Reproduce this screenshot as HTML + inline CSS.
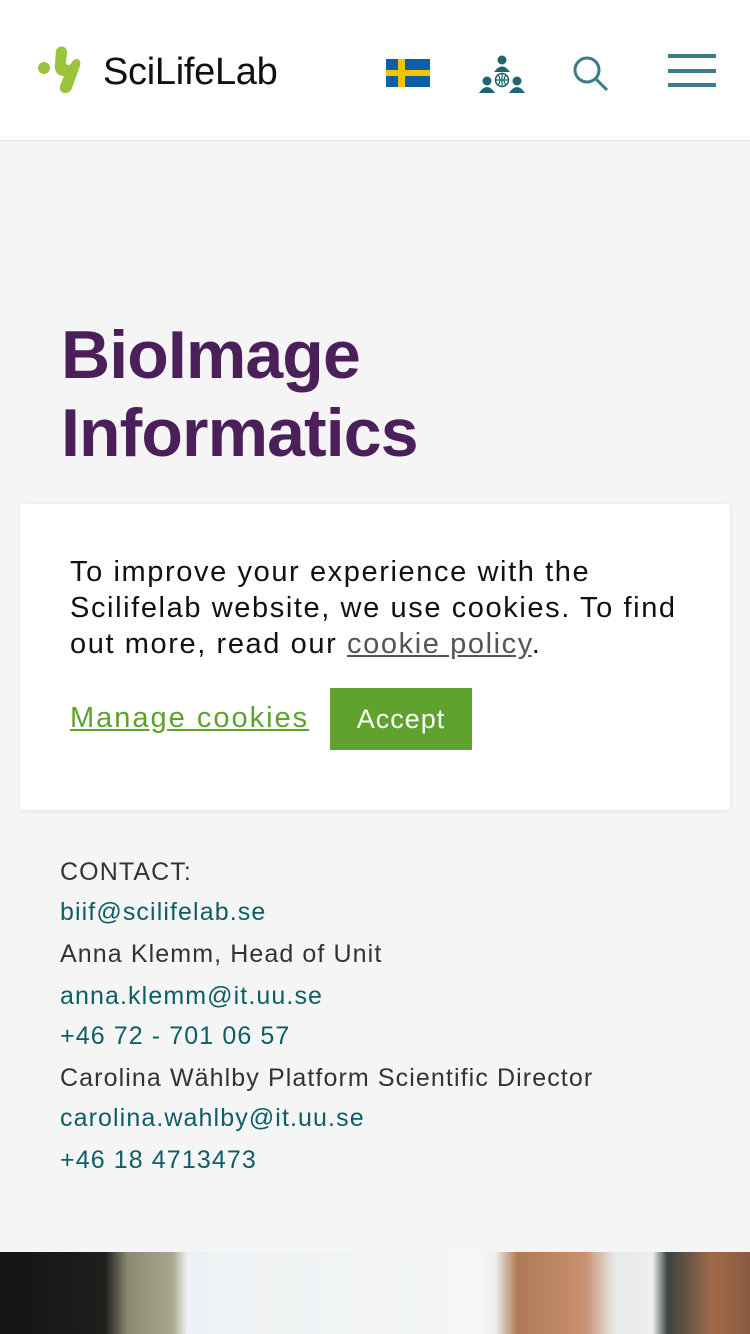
<!DOCTYPE html>
<html><head><meta charset="utf-8"><style>
body{margin:0;width:750px;height:1334px;overflow:hidden;background:#f5f5f5;font-family:"Liberation Sans",sans-serif;position:relative}
.hdr{position:absolute;top:0;left:0;width:750px;height:140px;background:#fff;border-bottom:1px solid #e4e4e4}
.t{position:absolute;white-space:nowrap}
h1{position:absolute;left:61px;top:316px;margin:0;font-size:68px;line-height:78px;color:#4a1f5a;letter-spacing:-0.9px;font-weight:bold}
.card{position:absolute;left:20px;top:504px;width:710px;height:306px;background:#fff;border-radius:3px;box-shadow:0 1px 4px rgba(0,0,0,.08)}
.c{position:absolute;left:60px;font-size:25px;color:#333;letter-spacing:1.1px}
.l{color:#0d5e66}
</style></head><body>
<div class="hdr">
<svg style="position:absolute;left:36px;top:44px" width="60" height="52" viewBox="0 0 60 52"><circle cx="8" cy="24" r="6" fill="#9bc33c"/><path d="M20 6 C24 0 32 2 31 10 L30 18 C30 22 34 22 36 18 C39 13 46 14 44 22 L36 44 C33 52 22 50 24 42 L28 32 C22 32 18 28 19 20 Z" fill="#9bc33c"/></svg>
<div class="t" style="left:103px;top:51px;font-size:38px;color:#111;letter-spacing:-0.3px">SciLifeLab</div>
<svg style="position:absolute;left:386px;top:59px" width="44" height="28"><rect width="44" height="28" fill="#0b5fa5"/><rect x="12" width="7" height="28" fill="#f5c400"/><rect y="11" width="44" height="6" fill="#f5c400"/></svg>
<svg style="position:absolute;left:479px;top:54px" width="46" height="40" viewBox="0 0 46 40" fill="#1f6570"><circle cx="23" cy="6" r="4.5"/><path d="M15 18 Q23 7 31 18Z"/><circle cx="23" cy="26" r="6.5" fill="none" stroke="#1f6570" stroke-width="1.6"/><path d="M16.5 26h13M23 19.5v13M19 21q4 5 0 10M27 21q-4 5 0 10" stroke="#1f6570" stroke-width="1.2" fill="none"/><circle cx="8" cy="27" r="4.5"/><path d="M0 39 Q8 27 16 39Z"/><circle cx="38" cy="27" r="4.5"/><path d="M30 39 Q38 27 46 39Z"/></svg>
<svg style="position:absolute;left:572px;top:55px" width="38" height="36"><circle cx="15" cy="15" r="12" fill="none" stroke="#3b7d86" stroke-width="3"/><path d="M24 24 L35 35" stroke="#3b7d86" stroke-width="3"/></svg>
<div style="position:absolute;left:668px;top:54px;width:48px;height:4px;background:#3b7d86;box-shadow:0 15px 0 #3b7d86,0 29px 0 #3b7d86"></div>
</div>
<h1>BioImage<br>Informatics</h1>
<div class="card">
<div class="t" style="left:50px;top:50px;font-size:29px;line-height:36px;color:#111;letter-spacing:1.6px">To improve your experience with the<br>Scilifelab website, we use cookies. To find<br>out more, read our <span style="color:#555;text-decoration:underline">cookie policy</span>.</div>
<div class="t" style="left:50px;top:198px;font-size:29px;color:#5ea22c;text-decoration:underline;letter-spacing:2px">Manage cookies</div>
<div style="position:absolute;left:310px;top:184px;width:142px;height:62px;background:#5fa22d;color:#fff;font-size:27px;line-height:62px;text-align:center;letter-spacing:1px">Accept</div>
</div>
<div class="c t" style="top:858px">CONTACT:</div>
<div class="c t l" style="top:898px">biif@scilifelab.se</div>
<div class="c t" style="top:940px">Anna Klemm, Head of Unit</div>
<div class="c t l" style="top:982px">anna.klemm@it.uu.se</div>
<div class="c t l" style="top:1022px">+46 72 - 701 06 57</div>
<div class="c t" style="top:1064px">Carolina Wählby Platform Scientific Director</div>
<div class="c t l" style="top:1104px">carolina.wahlby@it.uu.se</div>
<div class="c t l" style="top:1146px">+46 18 4713473</div>
<div style="position:absolute;left:0;top:1252px;width:750px;height:82px;background:linear-gradient(90deg,#141414 0,#1e1e1c 14%,#8a8a70 17%,#a9a88e 23%,#eef1f3 25%,#f4f6f7 64%,#efefef 66%,#b07a55 69%,#c89070 78%,#e8eaea 82%,#eceeee 87%,#3a4440 89%,#a06a4a 95%,#8a5a40 100%)"></div>
</body></html>
